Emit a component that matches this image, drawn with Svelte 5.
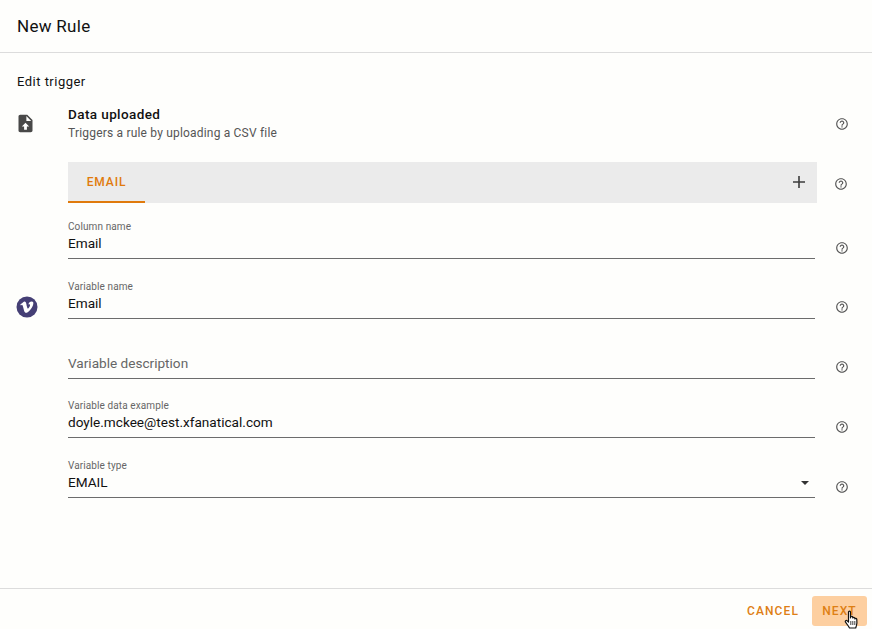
<script>
  const fields = [
    { label: 'Column name', value: 'Email' },
    { label: 'Variable name', value: 'Email', vimeo: true },
    { label: '', value: '', placeholder: 'Variable description' },
    { label: 'Variable data example', value: 'doyle.mckee@test.xfanatical.com' },
    { label: 'Variable type', value: 'EMAIL', select: true }
  ];
</script>

{#snippet help()}
  <svg class="help" viewBox="0 0 24 24" width="14" height="14" aria-hidden="true">
    <path fill="#555" d="M11 18h2v-2h-2v2zm1-16C6.48 2 2 6.48 2 12s4.48 10 10 10 10-4.48 10-10S17.52 2 12 2zm0 18c-4.41 0-8-3.59-8-8s3.59-8 8-8 8 3.59 8 8-3.59 8-8 8zm0-14c-2.21 0-4 1.79-4 4h2c0-1.1.9-2 2-2s2 .9 2 2c0 2-3 1.75-3 5h2c0-2.25 3-2.5 3-5 0-2.21-1.79-4-4-4z"/>
  </svg>
{/snippet}

<div class="page">
  <header class="top"><h1>New Rule</h1></header>

  <main class="body">
    <h2>Edit trigger</h2>

    <div class="trigger">
      <div class="icon-col">
        <svg viewBox="0 0 24 24" width="21" height="21" aria-hidden="true">
          <path fill="#484848" d="M14 2H6c-1.1 0-2 .9-2 2v16c0 1.1.9 2 2 2h12c1.100 0 2-.9 2-2V8l-6-6zm-1 7V3.500L18.500 9H13z"/>
          <path fill="#fff" d="M12 11.200l-4.200 4.300h2.600V19h3.200v-3.500h2.600z"/>
        </svg>
      </div>
      <div class="trigger-text">
        <div class="t-title">Data uploaded</div>
        <div class="t-sub">Triggers a rule by uploading a CSV file</div>
      </div>
      <div class="help-col">{@render help()}</div>
    </div>

    <div class="tabs-row">
      <div class="tabs">
        <div class="tab">EMAIL</div>
        <svg class="plus" viewBox="0 0 14 14" width="14" height="14" aria-hidden="true">
          <path fill="#3c3c3c" d="M6.200 1h1.600v5.200H13v1.600H7.800V13H6.200V7.800H1V6.200h5.200z"/>
        </svg>
      </div>
      <div class="help-col tight">{@render help()}</div>
    </div>

    <div class="fields">
      {#each fields as f}
        <div class="field-row">
          <div class="icon-col">
            {#if f.vimeo}
              <svg class="vimeo" viewBox="0 0 22 22" width="22" height="22" aria-hidden="true">
                <circle cx="11" cy="11" r="10.500" fill="#453f75"/>
                <path fill="#fff" d="M17.200 8.200c-.1 1.300-1 3-2.700 5.200-1.800 2.300-3.300 3.400-4.500 3.400-.8 0-1.400-.7-1.900-2.100l-1-3.800c-.4-1.400-.8-2.100-1.200-2.100-.1 0-.4.200-1 .6l-.6-.8c.7-.6 1.300-1.200 2-1.700.9-.8 1.500-1.200 2-1.300 1-.1 1.700.6 2 2.100.3 1.600.5 2.600.7 3 .3 1.300.6 1.900 1 1.900.3 0 .7-.4 1.200-1.300.5-.8.800-1.500.8-1.900.1-.7-.2-1.100-.8-1.100-.3 0-.6.100-.9.200.6-2 1.800-3 3.500-2.900 1.300 0 1.900.9 1.400 2.600z"/>
              </svg>
            {/if}
          </div>
          <div class="field" class:select={f.select}>
            <div class="label">{f.label}</div>
            <div class="value" class:ph={f.placeholder}>{f.value || f.placeholder}</div>
            {#if f.select}<span class="caret"></span>{/if}
          </div>
          <div class="help-col field-help">{@render help()}</div>
        </div>
      {/each}
    </div>
  </main>

  <footer class="foot">
    <button class="btn">CANCEL</button>
    <button class="btn next">NEXT
      <svg class="hand" viewBox="0 0 16 22" width="16" height="22" aria-hidden="true">
        <path fill="#fff" stroke="#111" stroke-width="1.200" stroke-linejoin="round" d="M4.500 2c0-1.300 2-1.300 2 0v6l.2-1c.2-1 1.800-1 2 .1l.1.900c.3-1 1.800-.9 2 .2l.1.800c.4-.9 1.800-.7 1.900.4.200 2 .2 4.200-.3 6l-.8 2.600H5.500L4.300 16 1.500 12.200c-.8-1.200.7-2.400 1.700-1.400l1.300 1.300z"/>
        <path fill="none" stroke="#111" stroke-width=".8" d="M6.800 11v4M8.800 11v4M10.800 11v4"/>
      </svg>
    </button>
  </footer>
</div>

<style>
  :global(body) { margin: 0; background: #fefefc; }
  .page {
    width: 872px; height: 629px; display: flex; flex-direction: column;
    font-family: Roboto, "Liberation Sans", sans-serif; color: #111; overflow: hidden; position: relative;
  }
  .top { height: 52px; flex: none; border-bottom: 1px solid #dcdcdc; display: flex; align-items: center; padding-left: 17px; }
  h1 { margin: 0; font-size: 17px; font-weight: 400; letter-spacing: .3px; line-height: 52px; }
  .body { flex: 1; padding: 20px 0 0 17px; }
  h2 { margin: 0; font-size: 13px; font-weight: 400; line-height: 18px; letter-spacing: .48px; }
  .trigger { display: flex; margin-top: 5px; height: 50px; align-items: flex-start; }
  .icon-col { width: 51px; flex: none; display: flex; align-items: center; }
  .trigger .icon-col { margin-left: -2px; width: 53px; padding-top: 17px; }
  .trigger-text { width: 747px; flex: none; padding-top: 9px; }
  .t-title { font-size: 13.500px; font-weight: 500; line-height: 18px; letter-spacing: .4px; }
  .t-sub { font-size: 12px; line-height: 18px; color: #555; letter-spacing: .19px; margin-top: 1px; }
  .help-col { width: 57px; flex: none; display: flex; padding-left: 11px; box-sizing: border-box; }
  .trigger .help-col { padding-top: 21px; padding-left: 5px; margin-left: 15px; width: 40px; }
  .help { display: block; }
  .tabs-row { display: flex; margin: 16px 0 0 51px; align-items: center; }
  .tabs { width: 749px; height: 41px; background: #ebebeb; display: flex; justify-content: space-between; align-items: center; padding-right: 11px; box-sizing: border-box; }
  .tab { height: 41px; width: 77px; box-sizing: border-box; border-bottom: 2px solid #e07a0c; color: #e07a0c; font-size: 12px; font-weight: 500; letter-spacing: .9px; text-align: center; line-height: 41px; }
  .plus { margin-top: -2px; }
  .help-col.tight { padding-left: 17px; width: 40px; padding-top: 2px; }
  .fields { margin-top: 1px; }
  .field-row { display: flex; height: 59.750px; }
  .field-row .icon-col { height: 59.750px; padding-top: 14px; box-sizing: border-box; align-items: flex-end; }
  .vimeo { margin: 0 0 6px -1px; }
  .field { width: 747px; flex: none; position: relative; height: 55px; box-sizing: border-box; border-bottom: 1px solid #6c6c6c; padding-top: 17px; }
  .label { font-size: 10px; line-height: 12px; color: #666; height: 12px; letter-spacing: .1px; }
  .value { font-size: 13.600px; line-height: 20px; }
  .value.ph { color: #666; }
  .caret { position: absolute; right: 6px; top: 38px; width: 0; height: 0; border-left: 4.500px solid transparent; border-right: 4.500px solid transparent; border-top: 4.500px solid #333; }
  .field-help { padding-left: 20px; padding-top: 36.500px; width: 40px; box-sizing: content-box; }
  .foot { height: 41px; flex: none; box-sizing: border-box; border-top: 1px solid #dcdcdc; display: flex; justify-content: flex-end; align-items: flex-start; padding: 7px 5px 0 0; gap: 7px; }
  .btn { position: relative; font: 500 12px Roboto, "Liberation Sans", sans-serif; letter-spacing: 1.100px; color: #de7f14; background: none; border: 0; height: 30px; width: 64px; padding: 0; border-radius: 3px; }
  .btn.next { width: 55px; background: #fdcfa0; }
  .hand { position: absolute; left: 32px; top: 14px; }
</style>
